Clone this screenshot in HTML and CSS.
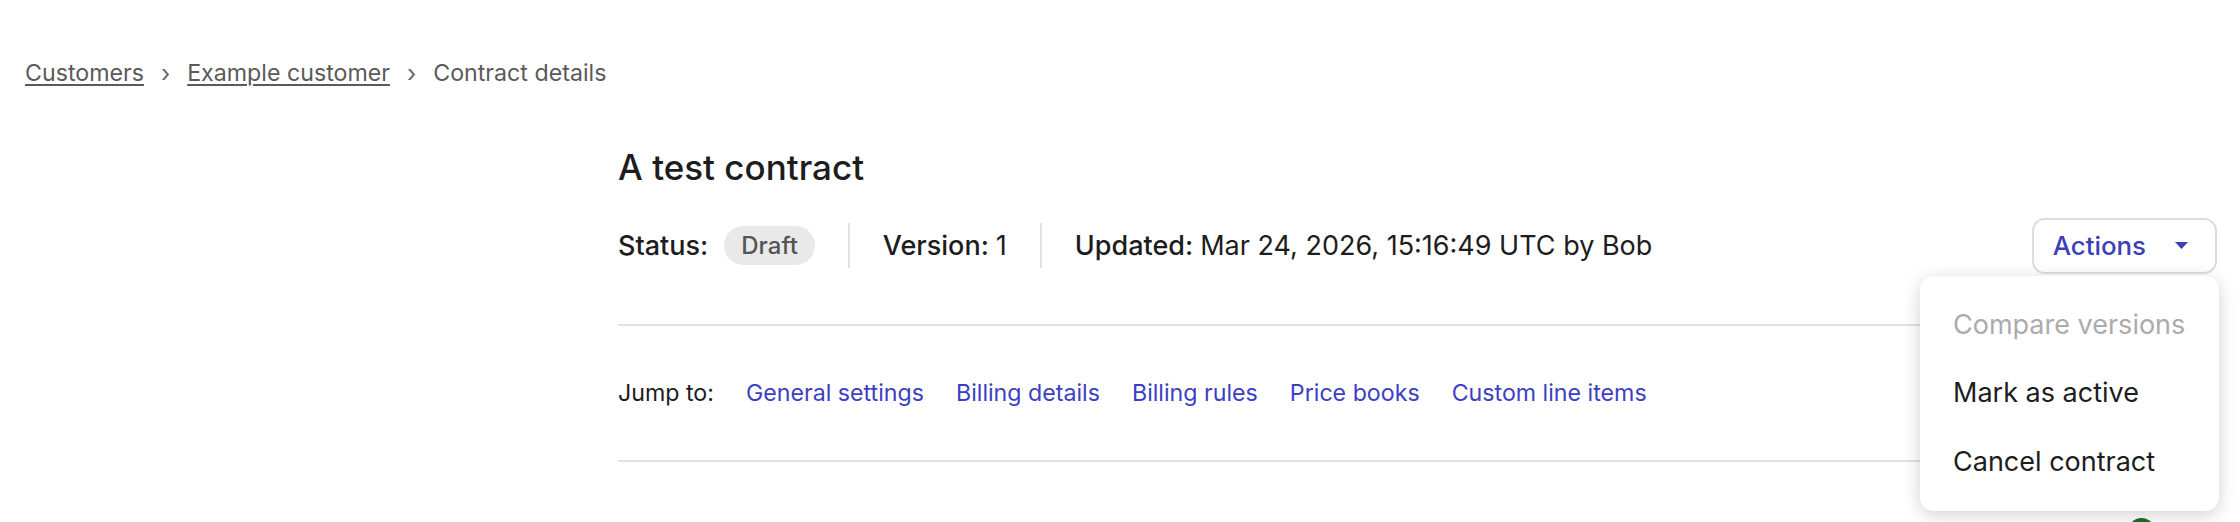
FILE: index.html
```html
<!DOCTYPE html>
<html lang="en">
<head>
    <meta charset="UTF-8">
    <meta name="viewport" content="width=device-width, initial-scale=1.0">
    <title>Contract details</title>
    <link rel="stylesheet" href="styles.css">
</head>
<body>
    <div class="page">
        <nav class="breadcrumb">
            <a href="#" class="crumb">Customers</a>
            <span class="crumb-sep">›</span>
            <a href="#" class="crumb">Example customer</a>
            <span class="crumb-sep">›</span>
            <span class="crumb-current">Contract details</span>
        </nav>

        <div class="layout">
            <div class="sidebar"></div>

            <main class="content">
                <h1 class="contract-title">A test contract</h1>

                <div class="contract-meta">
                    <div class="meta-items">
                        <div class="meta-item">
                            <span class="meta-label">Status:</span>
                            <span class="status-pill">Draft</span>
                        </div>
                        <div class="meta-divider"></div>
                        <div class="meta-item">
                            <span class="meta-label">Version:</span> 1
                        </div>
                        <div class="meta-divider"></div>
                        <div class="meta-item">
                            <span class="meta-label">Updated:</span> Mar 24, 2026, 15:16:49 UTC by Bob
                        </div>
                    </div>

                    <div class="actions">
                        <button type="button" class="actions-button">
                            Actions
                            <svg class="caret" width="13" height="7" viewBox="0 0 13 7"><path d="M0 0h13L6.5 7z" fill="currentColor"/></svg>
                        </button>
                        <ul class="actions-menu">
                            <li class="menu-item disabled">Compare versions</li>
                            <li class="menu-item">Mark as active</li>
                            <li class="menu-item">Cancel contract</li>
                        </ul>
                    </div>
                </div>

                <div class="jump-nav">
                    <span class="jump-label">Jump to:</span>
                    <a href="#general" class="jump-link">General settings</a>
                    <a href="#billing" class="jump-link">Billing details</a>
                    <a href="#rules" class="jump-link">Billing rules</a>
                    <a href="#price-books" class="jump-link">Price books</a>
                    <a href="#line-items" class="jump-link">Custom line items</a>
                </div>

                <div class="section-head">
                    <span class="section-status"></span>
                </div>
            </main>
        </div>
    </div>
</body>
</html>
```

FILE: styles.css
```css
body {
    font-family: Inter, 'Noto Sans', sans-serif;
    margin: 0;
    background-color: #fff;
    color: #1d1d1d;
}

.page {
    padding: 57px 23px 0 25px;
}

.breadcrumb {
    display: flex;
    align-items: center;
    gap: 17px;
    font-size: 23.2px;
    line-height: 33.6px;
    color: #5a5a5a;
}

.crumb {
    color: #5a5a5a;
    text-decoration: underline;
    text-underline-offset: 3px;
}

.crumb-sep {
    font-size: 24px;
    color: #666;
}

.layout {
    display: grid;
    grid-template-columns: 593px 1fr;
}

.contract-title {
    margin: 56px 0 0;
    font-size: 35px;
    line-height: 40px;
    font-weight: 500;
}

.contract-meta {
    display: flex;
    justify-content: space-between;
    align-items: center;
    margin-top: 31px;
    padding-bottom: 50px;
    border-bottom: 2px solid #e2e2e2;
}

.meta-items {
    display: flex;
    align-items: center;
    gap: 33px;
    font-size: 27px;
}

.meta-item {
    display: flex;
    align-items: center;
    gap: 7px;
}

.meta-label {
    font-weight: 500;
}

.status-pill {
    margin-left: 9px;
    padding: 0 17px;
    height: 39px;
    line-height: 39px;
    border-radius: 20px;
    background-color: #e9e9e9;
    color: #555;
    font-size: 24px;
    font-weight: 500;
}

.meta-divider {
    width: 2px;
    height: 45px;
    background-color: #e2e2e2;
}

.actions {
    position: relative;
}

.actions-button {
    display: flex;
    align-items: center;
    gap: 29px;
    height: 56px;
    padding: 0 27px 0 19px;
    border: 2px solid #dcdcdc;
    border-radius: 13px;
    background-color: #fff;
    color: #3a3eb9;
    font-family: inherit;
    font-size: 25.8px;
    font-weight: 500;
    cursor: pointer;
}

.caret {
    display: block;
}

.actions-menu {
    position: absolute;
    top: 58px;
    right: -2px;
    width: 299px;
    margin: 0;
    padding: 15px 0;
    list-style: none;
    background-color: #fff;
    border-radius: 14px;
    box-shadow: 0 4px 18px rgba(0, 0, 0, 0.18);
    z-index: 10;
}

.menu-item {
    padding: 0 33px;
    height: 68.5px;
    line-height: 68.5px;
    font-size: 27px;
    color: #1d1d1d;
    cursor: pointer;
}

.menu-item.disabled {
    color: #ababab;
    cursor: default;
}

.jump-nav {
    display: flex;
    align-items: center;
    gap: 32px;
    padding: 51px 0 50px;
    border-bottom: 2px solid #e2e2e2;
    font-size: 23.2px;
    line-height: 33.6px;
}

.jump-link {
    color: #3c40c1;
    text-decoration: none;
}

.section-head {
    display: flex;
    justify-content: flex-end;
    padding: 56px 62px 0 0;
}

.section-status {
    width: 27px;
    height: 27px;
    border-radius: 50%;
    background-color: #1f6b2c;
}
```
